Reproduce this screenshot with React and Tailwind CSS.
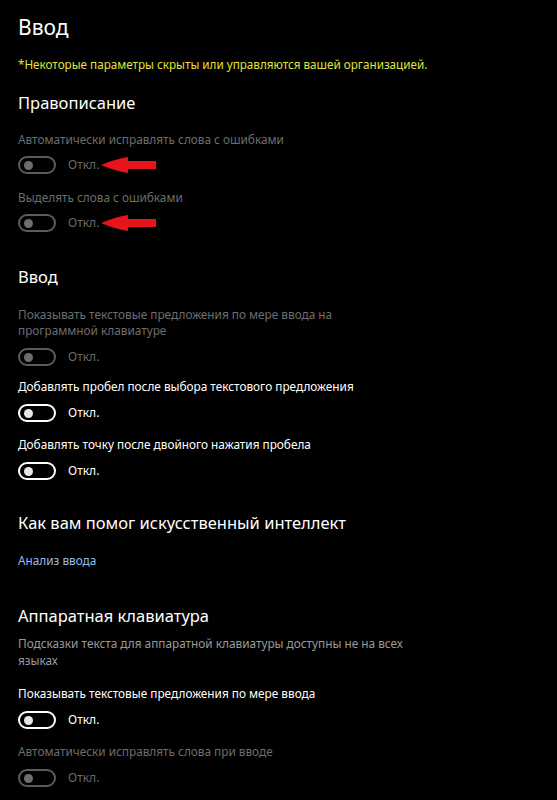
import React from 'react';

const Arrow = () => (
  <svg width="56" height="16" viewBox="0 0 56 16" className="ml-[2px]">
    <path d="M0 8 Q14 2 27 0 L27 4 L55 4 L55 12 L27 12 L27 16 Q14 14 0 8 Z" fill="#e8141b" />
  </svg>
);

const Toggle = ({ disabled, arrow }) => (
  <div className="flex items-center h-[18px]">
    <div
      className={
        'w-[38px] h-[18px] rounded-full border-2 flex items-center pl-[4px] ' +
        (disabled ? 'border-[#5c5c5c]' : 'border-white')
      }
    >
      <div className={'w-[9px] h-[9px] rounded-full ' + (disabled ? 'bg-[#6e6e6e]' : 'bg-[#e6e6e6]')} />
    </div>
    <span className={'ml-[12px] text-[12px] ' + (disabled ? 'text-[#6a6a6a]' : 'text-white')}>Откл.</span>
    {arrow && <Arrow />}
  </div>
);

const Setting = ({ label, disabled, arrow, className, tight }) => (
  <div className={className}>
    <p className={'text-[11.8px] leading-[16px] ' + (disabled ? 'text-[#6d6d6d]' : 'text-white')}>{label}</p>
    <div className={tight ? 'mt-[9px]' : 'mt-[10px]'}>
      <Toggle disabled={disabled} arrow={arrow} />
    </div>
  </div>
);

const Heading = ({ children, className }) => (
  <h2 className={'text-[16.5px] leading-[24px] text-white ' + (className || '')}>{children}</h2>
);

export default function App() {
  return (
    <div
      className="w-[557px] h-[800px] bg-black overflow-hidden px-[18px] pt-[12px]"
      style={{ fontFamily: '"Noto Sans", "Open Sans", sans-serif' }}
    >
      <h1 className="text-[21px] leading-[30px] text-white">Ввод</h1>
      <p className="mt-[14px] text-[11.7px] leading-[16px] text-[#e3e33a]">
        *Некоторые параметры скрыты или управляются вашей организацией.
      </p>

      <Heading className="mt-[19px]">Правописание</Heading>
      <Setting className="mt-[16px]" tight label="Автоматически исправлять слова с ошибками" disabled arrow />
      <Setting className="mt-[15px]" tight label="Выделять слова с ошибками" disabled arrow />

      <Heading className="mt-[33px]">Ввод</Heading>
      <Setting
        className="mt-[17px]"
        label={
          <>
            Показывать текстовые предложения по мере ввода на
            <br />
            программной клавиатуре
          </>
        }
        disabled
      />
      <Setting className="mt-[12px]" label="Добавлять пробел после выбора текстового предложения" />
      <Setting className="mt-[14px]" label="Добавлять точку после двойного нажатия пробела" />

      <Heading className="mt-[31px]">Как вам помог искусственный интеллект</Heading>
      <p className="mt-[17px] text-[11.8px] leading-[16px] text-[#8fbde8]">Анализ ввода</p>

      <Heading className="mt-[36px]">Аппаратная клавиатура</Heading>
      <p className="mt-[7px] text-[11.8px] leading-[17px] text-[#9a9a9a]">
        Подсказки текста для аппаратной клавиатуры доступны не на всех
        <br />
        языках
      </p>
      <Setting className="mt-[16px]" label="Показывать текстовые предложения по мере ввода" />
      <Setting className="mt-[14px]" label="Автоматически исправлять слова при вводе" disabled />
    </div>
  );
}
